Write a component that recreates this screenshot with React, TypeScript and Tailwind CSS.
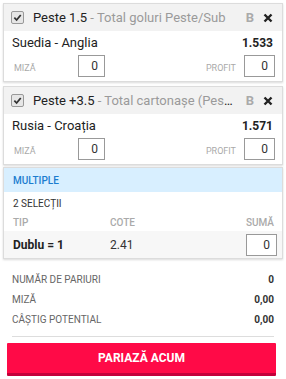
import React from "react";

function Check() {
  return (
    <div className="w-[13px] h-[13px] border border-[#999] bg-[#e6e6e6] rounded-[2px] flex items-center justify-center shrink-0">
      <svg width="9" height="9" viewBox="0 0 10 10">
        <path d="M1.5 5.2 L4 7.8 L8.6 2.2" stroke="#333" strokeWidth="2" fill="none" />
      </svg>
    </div>
  );
}

function Close() {
  return (
    <svg width="10" height="10" viewBox="0 0 10 10" className="shrink-0">
      <path d="M1.5 1.5 L8.5 8.5 M8.5 1.5 L1.5 8.5" stroke="#222" strokeWidth="2.4" />
    </svg>
  );
}

function Input({ w }: { w: string }) {
  return (
    <div className={`${w} h-[22px] border border-[#999] bg-white flex items-center justify-end pr-[6px] text-[12px] text-[#333]`}>0</div>
  );
}

function Card({ name, desc, match, odd }: { name: string; desc: string; match: string; odd: string }) {
  return (
    <div className="mx-[3px] border border-[#dcdcdc] shadow-[0_1px_2px_rgba(0,0,0,0.15)] bg-white">
      <div className="h-[27px] bg-[#f2f2f2] flex items-center pl-[7px] pr-[9px]">
        <Check />
        <div className="ml-[9px] flex-1 min-w-0 truncate text-[13px] text-[#222]">
          {name}
          <span className="text-[#9a9a9a]"> - {desc}</span>
        </div>
        <span className="ml-[10px] text-[13px] font-bold text-[#aaa]">B</span>
        <span className="ml-[9px]"><Close /></span>
      </div>
      <div className="h-[24px] flex items-center justify-between pl-[8px] pr-[9px]">
        <span className="text-[13px] text-[#222]">{match}</span>
        <span className="text-[12px] font-bold text-[#222]">{odd}</span>
      </div>
      <div className="h-[26px] flex items-start pl-[10px] pr-[7px]">
        <span className="text-[9px] text-[#aaa] mt-[7px] w-[64px]">MIZĂ</span>
        <Input w="w-[27px]" />
        <span className="ml-auto text-[9px] text-[#aaa] mt-[7px] mr-[8px]">PROFIT</span>
        <Input w="w-[31px]" />
      </div>
    </div>
  );
}

export default function App() {
  return (
    <div className="w-[286px] h-[379px] bg-white pt-[3px] overflow-hidden" style={{ fontFamily: "Roboto, 'Liberation Sans', sans-serif" }}>
      <Card name="Peste 1.5" desc="Total goluri Peste/Sub" match="Suedia - Anglia" odd="1.533" />
      <div className="h-[4px]" />
      <Card name="Peste +3.5" desc="Total cartonașe (Peste/Sub)" match="Rusia - Croația" odd="1.571" />
      <div className="h-[2px]" />
      <div className="mx-[3px] border border-[#dcdcdc] shadow-[0_1px_2px_rgba(0,0,0,0.15)] bg-white">
        <div className="h-[24px] bg-[#d8efff] flex items-center pl-[9px] text-[10px] font-medium text-[#1c7dcf]">MULTIPLE</div>
        <div className="h-[22px] flex items-center pl-[9px] text-[10px] text-[#333]">2 SELECȚII</div>
        <div className="h-[17px] flex items-end pb-[1px] pl-[9px] pr-[8px] text-[10px] font-medium text-[#aaa]">
          <span className="w-[97px]">TIP</span>
          <span>COTE</span>
          <span className="ml-auto">SUMĂ</span>
        </div>
        <div className="h-[27px] bg-[#f7f7f7] flex items-center pl-[9px] pr-[5px]">
          <span className="w-[97px] text-[12px] font-bold text-[#222]">Dublu = 1</span>
          <span className="text-[12px] text-[#333]">2.41</span>
          <span className="ml-auto"><Input w="w-[31px]" /></span>
        </div>
      </div>
      <div className="px-[12px] pt-[10px]">
        <div className="flex justify-between h-[20px] items-center text-[10px] text-[#666]">
          <span>NUMĂR DE PARIURI</span>
          <span className="font-bold text-[#333]">0</span>
        </div>
        <div className="flex justify-between h-[20px] items-center text-[10px] text-[#666]">
          <span>MIZĂ</span>
          <span className="font-bold text-[#333]">0,00</span>
        </div>
        <div className="flex justify-between h-[20px] items-center text-[10px] text-[#666]">
          <span>CÂȘTIG POTENTIAL</span>
          <span className="font-bold text-[#333]">0,00</span>
        </div>
        <div className="h-px bg-[#ddd] mt-[7px]" />
      </div>
      <div className="ml-[7px] mr-[10px] mt-[6px] h-[33px] bg-[#ff0a47] border-b-[3px] border-[#c4003a] rounded-[1px] flex items-center justify-center text-white text-[12px] font-bold">
        PARIAZĂ ACUM
      </div>
    </div>
  );
}
